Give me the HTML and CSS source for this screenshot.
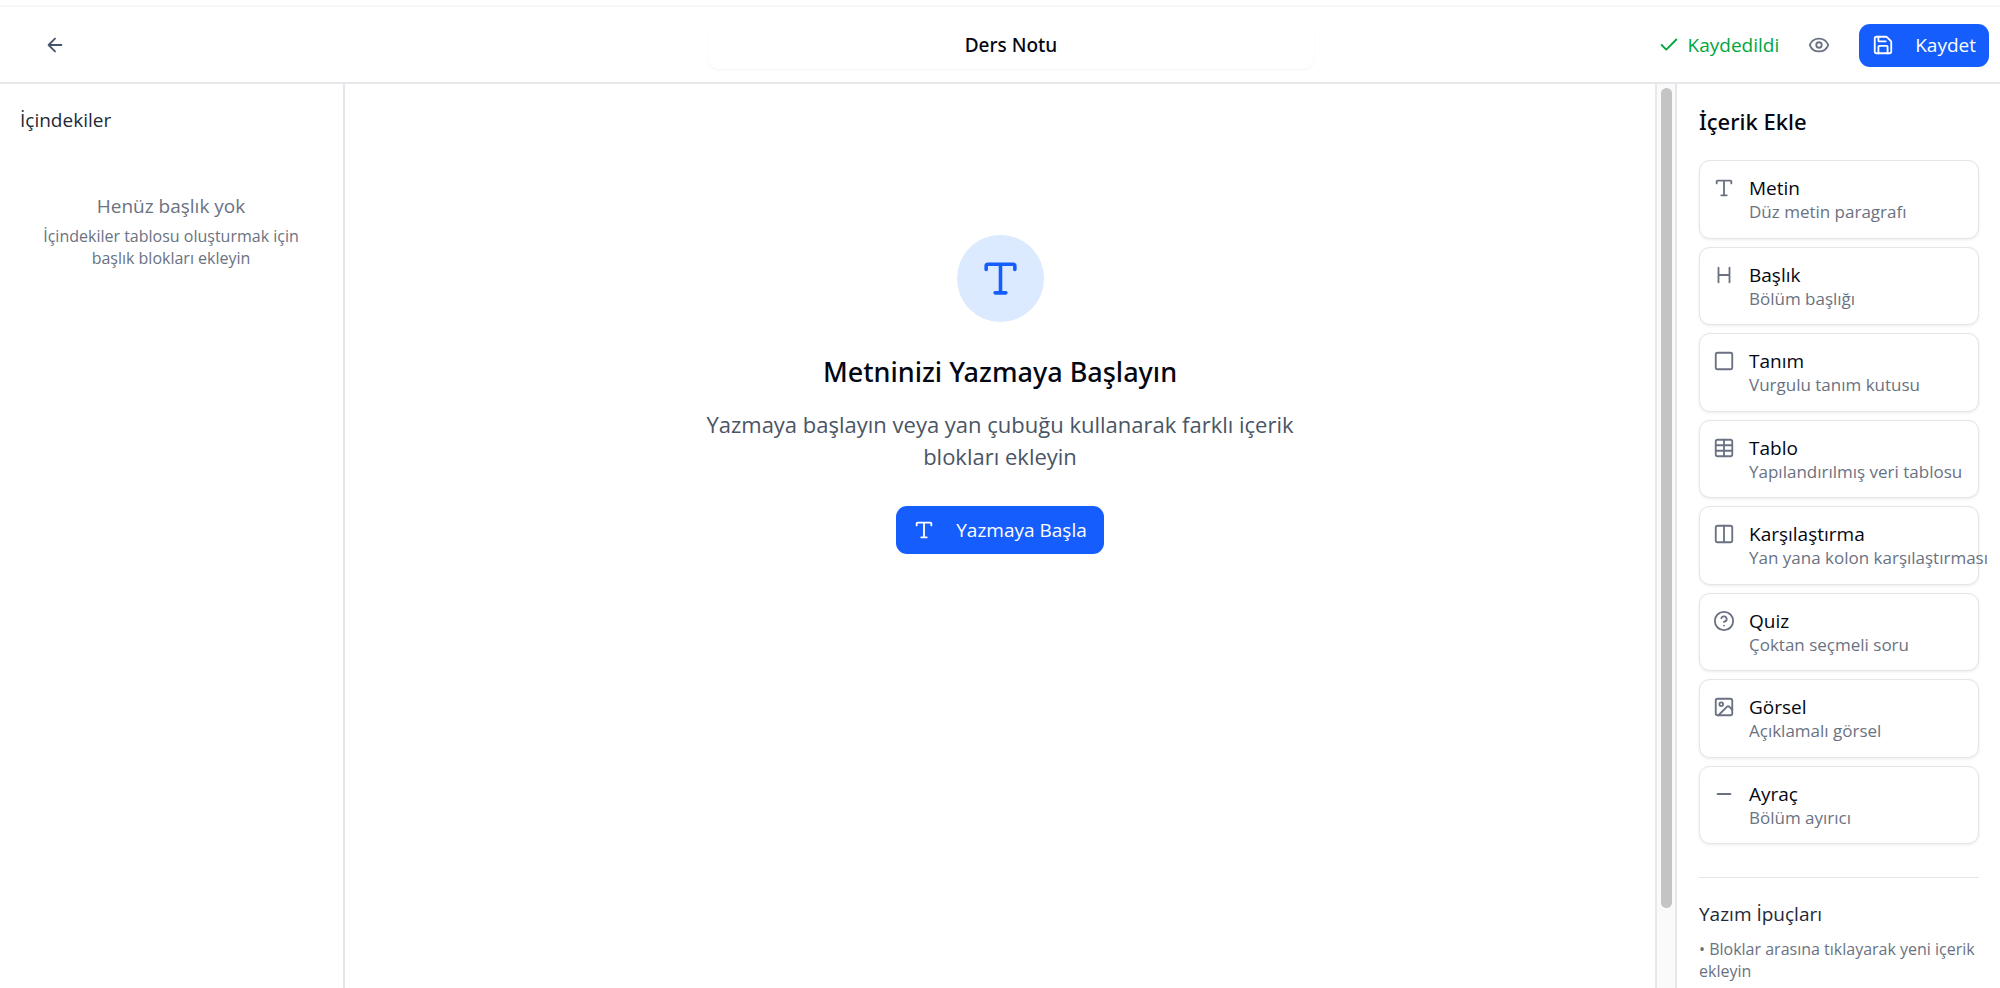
FILE: index.html
```html
<!DOCTYPE html>
<html lang="tr">
<head>
<meta charset="utf-8">
<meta name="viewport" content="width=device-width, initial-scale=1">
<title>Ders Notu</title>
<link rel="stylesheet" href="styles.css">
</head>
<body>
<svg class="sprite" aria-hidden="true">
  <symbol id="type" viewBox="0 0 24 24"><path d="M4 7V5a1 1 0 0 1 1-1h14a1 1 0 0 1 1 1v2M9 20h6M12 4v16"/></symbol>
  <symbol id="heading" viewBox="0 0 24 24"><path d="M6 12h12M6 20V4M18 20V4"/></symbol>
  <symbol id="square" viewBox="0 0 24 24"><rect width="18" height="18" x="3" y="3" rx="2"/></symbol>
  <symbol id="table" viewBox="0 0 24 24"><path d="M12 3v18M3 9h18M3 15h18"/><rect width="18" height="18" x="3" y="3" rx="2"/></symbol>
  <symbol id="columns" viewBox="0 0 24 24"><rect width="18" height="18" x="3" y="3" rx="2"/><path d="M12 3v18"/></symbol>
  <symbol id="help" viewBox="0 0 24 24"><circle cx="12" cy="12" r="10"/><path d="M9.09 9a3 3 0 0 1 5.83 1c0 2-3 3-3 3M12 17h.01"/></symbol>
  <symbol id="image" viewBox="0 0 24 24"><rect width="18" height="18" x="3" y="3" rx="2"/><circle cx="9" cy="9" r="2"/><path d="m21 15-3.086-3.086a2 2 0 0 0-2.828 0L6 21"/></symbol>
  <symbol id="minus" viewBox="0 0 24 24"><path d="M5 12h14"/></symbol>
  <symbol id="arrow" viewBox="0 0 24 24"><path d="m12 19-7-7 7-7M19 12H5"/></symbol>
  <symbol id="check" viewBox="0 0 24 24"><path d="M20 6 9 17l-5-5"/></symbol>
  <symbol id="eye" viewBox="0 0 24 24"><path d="M2.062 12.348a1 1 0 0 1 0-.696 10.75 10.75 0 0 1 19.876 0 1 1 0 0 1 0 .696 10.75 10.75 0 0 1-19.876 0"/><circle cx="12" cy="12" r="3"/></symbol>
  <symbol id="save" viewBox="0 0 24 24"><path d="M15.2 3a2 2 0 0 1 1.4.6l3.8 3.8a2 2 0 0 1 .6 1.4V19a2 2 0 0 1-2 2H5a2 2 0 0 1-2-2V5a2 2 0 0 1 2-2z"/><path d="M17 21v-7a1 1 0 0 0-1-1H8a1 1 0 0 0-1 1v7M7 3v4a1 1 0 0 0 1 1h7"/></symbol>
</svg>
<div class="app">
  <header class="topbar">
    <div class="topbar-start">
      <button class="icon-button back" type="button" aria-label="Geri"><svg class="icon"><use href="#arrow"/></svg></button>
    </div>
    <input class="title-input" type="text" value="Ders Notu" aria-label="Başlık">
    <div class="topbar-end">
      <span class="status"><svg class="icon"><use href="#check"/></svg>Kaydedildi</span>
      <button class="icon-button" type="button" aria-label="Önizle"><svg class="icon"><use href="#eye"/></svg></button>
      <button class="primary save" type="button"><svg class="icon"><use href="#save"/></svg>Kaydet</button>
    </div>
  </header>
  <div class="workspace">
    <nav class="outline">
      <h2 class="subheading">İçindekiler</h2>
      <div class="outline-empty">
        <p class="outline-title">Henüz başlık yok</p>
        <p class="small">İçindekiler tablosu oluşturmak için başlık blokları ekleyin</p>
      </div>
    </nav>
    <main class="editor">
      <div class="empty">
        <div class="badge"><svg class="icon icon-large"><use href="#type"/></svg></div>
        <h1 class="empty-title">Metninizi Yazmaya Başlayın</h1>
        <p class="empty-text">Yazmaya başlayın veya yan çubuğu kullanarak farklı içerik blokları ekleyin</p>
        <button class="primary start" type="button"><svg class="icon"><use href="#type"/></svg>Yazmaya Başla</button>
      </div>
    </main>
    <div class="scrollbar" aria-hidden="true"><div class="thumb"></div></div>
    <aside class="panel">
      <h2 class="panel-title">İçerik Ekle</h2>
      <div class="blocks">
        <button class="block" type="button"><svg class="icon"><use href="#type"/></svg><span class="block-text"><span class="block-name">Metin</span><span class="block-note">Düz metin paragrafı</span></span></button>
        <button class="block" type="button"><svg class="icon"><use href="#heading"/></svg><span class="block-text"><span class="block-name">Başlık</span><span class="block-note">Bölüm başlığı</span></span></button>
        <button class="block" type="button"><svg class="icon"><use href="#square"/></svg><span class="block-text"><span class="block-name">Tanım</span><span class="block-note">Vurgulu tanım kutusu</span></span></button>
        <button class="block" type="button"><svg class="icon"><use href="#table"/></svg><span class="block-text"><span class="block-name">Tablo</span><span class="block-note">Yapılandırılmış veri tablosu</span></span></button>
        <button class="block" type="button"><svg class="icon"><use href="#columns"/></svg><span class="block-text"><span class="block-name">Karşılaştırma</span><span class="block-note">Yan yana kolon karşılaştırması</span></span></button>
        <button class="block" type="button"><svg class="icon"><use href="#help"/></svg><span class="block-text"><span class="block-name">Quiz</span><span class="block-note">Çoktan seçmeli soru</span></span></button>
        <button class="block" type="button"><svg class="icon"><use href="#image"/></svg><span class="block-text"><span class="block-name">Görsel</span><span class="block-note">Açıklamalı görsel</span></span></button>
        <button class="block" type="button"><svg class="icon"><use href="#minus"/></svg><span class="block-text"><span class="block-name">Ayraç</span><span class="block-note">Bölüm ayırıcı</span></span></button>
      </div>
      <section class="tips">
        <h3 class="subheading">Yazım İpuçları</h3>
        <p class="small">• Bloklar arasına tıklayarak yeni içerik ekleyin</p>
      </section>
    </aside>
  </div>
</div>
</body>
</html>
```
FILE: styles.css
```css
* { box-sizing: border-box; }
body {
  margin: 0;
  background: #fff;
  color: #030712;
  font-family: "Open Sans", "Noto Sans", sans-serif;
  font-size: 19px;
  line-height: 28px;
}
h1, h2, h3, p { margin: 0; font-weight: 400; }
button, input { font: inherit; color: inherit; }
button { border: 0; background: none; padding: 0; cursor: pointer; }
.sprite { display: none; }
.icon {
  width: 22px;
  height: 22px;
  flex: none;
  fill: none;
  stroke: currentColor;
  stroke-width: 2;
  stroke-linecap: round;
  stroke-linejoin: round;
}
.app {
  height: 100vh;
  padding-top: 5px;
  display: flex;
  flex-direction: column;
  overflow: hidden;
}
.topbar {
  display: grid;
  grid-template-columns: 1fr 606px 1fr;
  align-items: center;
  column-gap: 20px;
  padding: 14px 11px 13px 33px;
  border-top: 2px solid #f8f8f9;
  border-bottom: 2px solid #e5e7eb;
}
.topbar-end { display: flex; align-items: center; justify-content: flex-end; }
.icon-button { width: 44px; height: 44px; display: grid; place-items: center; color: #6a7282; }
.back { color: #45556c; }
.title-input {
  width: 100%;
  height: 48px;
  border: 0;
  border-radius: 10px;
  background: #fff;
  text-align: center;
  font-family: "Noto Sans", "Open Sans", sans-serif;
  font-weight: 500;
  box-shadow: 0 1px 2px #0000000d;
}
.status { display: flex; align-items: center; gap: 8px; margin-right: 18px; color: #00a63e; }
.primary {
  display: flex;
  align-items: center;
  gap: 21px;
  border-radius: 11px;
  background: #155dfc;
  color: #fff;
}
.save { height: 43px; padding: 0 13px; margin-left: 18px; }
.workspace { flex: 1; min-height: 0; display: flex; }
.outline { width: 345px; flex: none; padding: 22px 21px 22px 20px; border-right: 2px solid #e5e7eb; }
.subheading { font-size: 19px; color: #1e2939; }
.outline-empty { padding: 58px 16px 0; text-align: center; color: #6a7282; }
.outline-title { margin-bottom: 5px; }
.small { font-size: 16px; line-height: 22px; color: #6a7282; }
.editor { flex: 1; min-width: 0; padding-top: 151px; }
.empty { width: 606px; max-width: 100%; margin: 0 auto; display: flex; flex-direction: column; align-items: center; text-align: center; }
.badge { width: 87px; height: 87px; border-radius: 50%; background: #dbeafe; color: #155dfc; display: grid; place-items: center; }
.icon-large { width: 43px; height: 43px; }
.empty-title, .panel-title { font-family: "Noto Sans", "Open Sans", sans-serif; font-weight: 500; }
.empty-title { margin-top: 30px; font-size: 27px; line-height: 40px; }
.empty-text { margin-top: 16px; font-size: 22px; line-height: 32px; color: #4a5565; }
.start { height: 48px; margin-top: 34px; padding: 0 17px; }
.scrollbar { width: 20px; flex: none; padding: 4px 3px 0 4px; border-left: 2px solid #e8e8e8; background: #fafafa; }
.thumb { width: 11px; height: 820px; border-radius: 6px; background: #c4c4c4; }
.panel { width: 325px; flex: none; padding: 21px 21px 0 22px; border-left: 2px solid #e5e7eb; overflow: hidden; }
.panel-title { font-size: 22px; line-height: 32px; }
.blocks { display: grid; grid-auto-rows: 1fr; gap: 8px; min-height: 684px; margin-top: 23px; }
.block {
  display: flex;
  align-items: flex-start;
  gap: 14px;
  min-width: 0;
  padding: 14px 13px;
  border: 1px solid #e5e5e5;
  border-radius: 11px;
  background: #fff;
  box-shadow: 0 1px 3px #00000014;
  text-align: left;
  white-space: nowrap;
}
.block .icon { margin-top: 2px; color: #6a7282; }
.block-text { display: flex; flex-direction: column; min-width: 0; }
.block-name { line-height: 26px; }
.block-note { font-size: 17px; line-height: 22px; color: #6a7282; }
.tips { margin-top: 33px; padding-top: 22px; border-top: 1px solid #e5e5e5; }
.tips .small { margin-top: 10px; }
```
